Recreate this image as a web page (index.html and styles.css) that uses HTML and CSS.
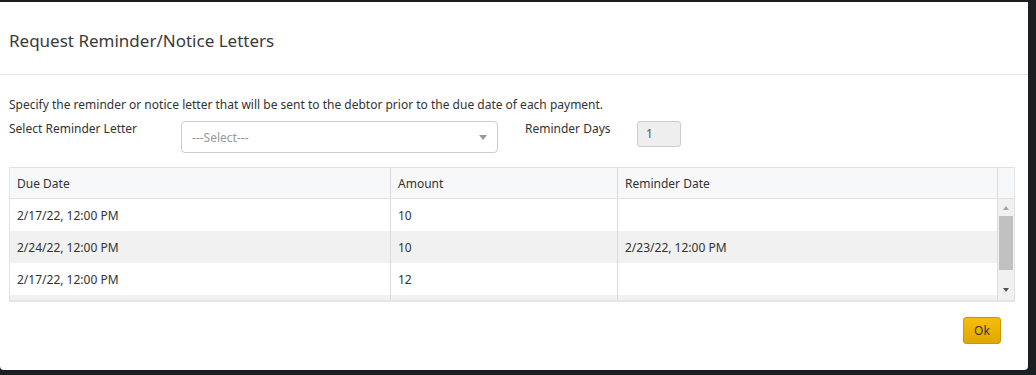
FILE: index.html
```html
<!DOCTYPE html>
<html lang="en">
<head>
    <meta charset="UTF-8">
    <title>Request Reminder/Notice Letters</title>
    <link rel="stylesheet" href="styles.css">
</head>
<body>
    <div class="modal">
        <div class="modal-header">
            <h2>Request Reminder/Notice Letters</h2>
        </div>
        <div class="modal-body">
            <p class="intro">Specify the reminder or notice letter that will be sent to the debtor prior to the due date of each payment.</p>
            <div class="form-row">
                <label class="label-letter">Select Reminder Letter</label>
                <div class="select-box">
                    <span class="placeholder">---Select---</span>
                    <span class="caret"></span>
                </div>
                <label class="label-days">Reminder Days</label>
                <div class="days-box">1</div>
            </div>

            <div class="grid">
                <div class="grid-head">
                    <div class="cell col-due">Due Date</div>
                    <div class="cell col-amount">Amount</div>
                    <div class="cell col-rem">Reminder Date</div>
                    <div class="cell col-bar"></div>
                </div>
                <div class="grid-body">
                    <div class="rows">
                        <div class="row">
                            <div class="cell col-due">2/17/22, 12:00 PM</div>
                            <div class="cell col-amount">10</div>
                            <div class="cell col-rem"></div>
                        </div>
                        <div class="row alt">
                            <div class="cell col-due">2/24/22, 12:00 PM</div>
                            <div class="cell col-amount">10</div>
                            <div class="cell col-rem">2/23/22, 12:00 PM</div>
                        </div>
                        <div class="row">
                            <div class="cell col-due">2/17/22, 12:00 PM</div>
                            <div class="cell col-amount">12</div>
                            <div class="cell col-rem"></div>
                        </div>
                        <div class="row alt">
                            <div class="cell col-due"></div>
                            <div class="cell col-amount"></div>
                            <div class="cell col-rem"></div>
                        </div>
                    </div>
                    <div class="scrollbar">
                        <span class="arrow up"></span>
                        <span class="thumb"></span>
                        <span class="arrow down"></span>
                    </div>
                </div>
            </div>

            <div class="actions">
                <button class="btn-ok">Ok</button>
            </div>
        </div>
    </div>
</body>
</html>
```

FILE: styles.css
```css
html, body {
    margin: 0;
    padding: 0;
}
body {
    background: #1b1e22;
    font-family: 'Noto Sans', 'Open Sans', sans-serif;
    font-size: 12px;
    color: #333;
    width: 1036px;
    height: 375px;
    overflow: hidden;
}
.modal {
    background: #fff;
    width: 1028px;
    height: 368px;
    margin-top: 2px;
    border-radius: 0 0 4px 4px;
}
.modal-header {
    height: 72px;
    border-bottom: 1px solid #e5e5e5;
    display: flex;
    align-items: center;
    padding: 0 9px;
}
.modal-header h2 {
    margin: 0;
    font-size: 17px;
    font-weight: normal;
    color: #3a3a3a;
    padding-top: 5px;
}
.modal-body {
    padding: 0 9px;
}
.intro {
    margin: 0;
    padding-top: 21px;
    line-height: 18px;
}
.form-row {
    display: flex;
    align-items: flex-start;
    height: 46px;
    margin-top: 7px;
}
.form-row label {
    line-height: 16px;
}
.label-letter {
    width: 172px;
}
.select-box {
    width: 295px;
    height: 30px;
    border: 1px solid #ccc;
    border-radius: 4px;
    display: flex;
    align-items: center;
    justify-content: space-between;
    padding: 0 10px;
}
.placeholder {
    color: #999;
}
.caret {
    width: 0;
    height: 0;
    border-left: 4px solid transparent;
    border-right: 4px solid transparent;
    border-top: 5px solid #999;
}
.label-days {
    margin-left: 27px;
    width: 112px;
}
.days-box {
    width: 34px;
    height: 24px;
    line-height: 24px;
    padding-left: 8px;
    background: #eee;
    border: 1px solid #ccc;
    border-radius: 3px;
    color: #555;
}
.grid {
    width: 1004px;
    border: 1px solid #e3e3e3;
    border-bottom: 2px solid #e6e6e6;
}
.grid-head {
    display: flex;
    height: 30px;
    background: #f7f8fa;
    border-bottom: 1px solid #dfe1e5;
}
.cell {
    box-sizing: border-box;
    padding-left: 7px;
    display: flex;
    align-items: center;
    border-right: 1px solid #dcdcdc;
}
.col-due { width: 381px; }
.col-amount { width: 227px; }
.col-rem { width: 380px; }
.col-bar { width: 16px; border-right: none; }
.grid-body {
    display: flex;
    height: 101px;
    overflow: hidden;
}
.rows {
    width: 988px;
}
.row {
    display: flex;
    height: 32px;
    background: #fff;
}
.row.alt {
    background: #f1f1f1;
}
.scrollbar {
    width: 16px;
    background: #f1f1f1;
    display: flex;
    flex-direction: column;
    align-items: center;
}
.arrow {
    width: 0;
    height: 0;
    border-left: 3px solid transparent;
    border-right: 3px solid transparent;
}
.arrow.up {
    border-bottom: 4px solid #a3a3a3;
    margin-top: 7px;
    margin-bottom: 6px;
}
.arrow.down {
    border-top: 4px solid #505050;
    margin-top: auto;
    margin-bottom: 8px;
}
.thumb {
    width: 14px;
    height: 54px;
    background: #c1c1c1;
}
.actions {
    display: flex;
    justify-content: flex-end;
    padding-right: 18px;
    margin-top: 15px;
}
.btn-ok {
    font-family: inherit;
    font-size: 12px;
    color: #333;
    width: 38px;
    height: 27px;
    padding: 0;
    border: 1px solid #c99700;
    border-radius: 3px;
    background: linear-gradient(#f7bd0c, #e0a700);
}
```
